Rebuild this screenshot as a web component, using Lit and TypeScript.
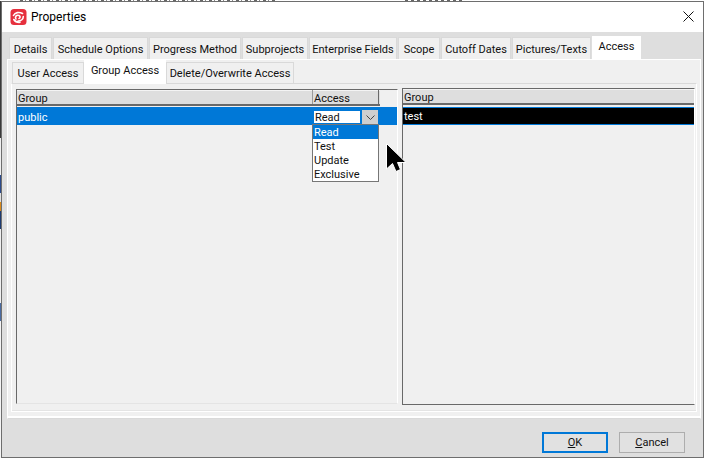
import { LitElement, html, css } from "lit";
import { customElement } from "lit/decorators.js";

const outerTabs: [string, number][] = [
  ["Details", 43],
  ["Schedule Options", 95],
  ["Progress Method", 92],
  ["Subprojects", 66],
  ["Enterprise Fields", 88],
  ["Scope", 42],
  ["Cutoff Dates", 70],
  ["Pictures/Texts", 79],
];
const innerTabs: [string, number, boolean][] = [
  ["User Access", 72, false],
  ["Group Access", 82, true],
  ["Delete/Overwrite Access", 128, false],
];

@customElement("app-root")
export class AppRoot extends LitElement {
  static styles = css`
    :host {
      display: block;
      width: 705px;
      height: 459px;
      overflow: hidden;
      font-family: Roboto, "Noto Sans", sans-serif;
      font-size: 11px;
      color: #111;
      background: #fff;
    }
    .desk {
      display: grid;
      grid-template-columns: 1px 703px 1px;
      grid-template-rows: 1px 457px 1px;
      width: 705px;
      height: 459px;
    }
    .peek-top {
      grid-column: 1 / -1;
      height: 1px;
      background:
        repeating-linear-gradient(90deg, #666 0 3px, #fff 3px 5px, #888 5px 6px, #fff 6px 9px) 20px 0 / 255px 1px no-repeat,
        repeating-linear-gradient(90deg, #666 0 3px, #fff 3px 6px) 405px 0 / 57px 1px no-repeat,
        #fff;
    }
    .peek-left {
      background: linear-gradient(
        #3a3a3a 0 30%,
        #f0f0f0 30% 38%,
        #2b4a8a 38% 42%,
        #e0e0e0 42% 44%,
        #d98a1a 44% 46%,
        #1d3a70 46% 50%,
        #f0f0f0 50% 66%,
        #4a6aa0 66% 70%,
        #f4f4f4 70%
      );
    }
    .window {
      display: flex;
      flex-direction: column;
      min-height: 0;
      border: 1px solid #6e6e6e;
      box-sizing: border-box;
      background: #dedede;
    }
    .title {
      height: 30px;
      flex: none;
      background: #fff;
      display: flex;
      align-items: center;
      padding: 0 9px 0 8px;
      gap: 4px;
      font-size: 12px;
    }
    .title .name {
      flex: 1;
      color: #000;
    }
    .close {
      display: block;
      margin-bottom: 2px;
    }
    .body {
      flex: 1;
      min-height: 0;
      display: flex;
      flex-direction: column;
      padding: 4px 2px 0 5px;
    }
    .tabs {
      display: flex;
      align-items: flex-end;
      height: 23px;
      flex: none;
    }
    .tabs.outer {
      padding-left: 2px;
      gap: 1px;
    }
    .tab {
      box-sizing: border-box;
      height: 22px;
      background: #f0f0f0;
      border: 1px solid #d9d9d9;
      border-bottom: 0;
      display: flex;
      align-items: center;
      justify-content: center;
      white-space: nowrap;
      flex: none;
      padding-top: 1px;
    }
    .tab.active {
      height: 24px;
      background: #fff;
      border: 0;
      margin-bottom: -1px;
      position: relative;
      z-index: 1;
      padding: 0 0 3px;
    }
    .pane {
      flex: none;
      height: 360px;
      box-sizing: border-box;
      background: #f0f0f0;
      border: 1px solid #fff;
      border-bottom-color: #d9d9d9;
      box-shadow: inset 0 -2px 0 #fff;
      padding: 0 3px 6px;
      display: flex;
      flex-direction: column;
    }
    .tabs.inner {
      height: 23px;
      padding-left: 1px;
    }
    .tabs.inner .tab {
      height: 21px;
    }
    .tabs.inner .tab.active {
      height: 24px;
    }
    .inner-pane {
      flex: 1;
      min-height: 0;
      box-sizing: border-box;
      border: 1px solid #fff;
      border-top-color: #d9d9d9;
      padding: 4px 1px 6px 4px;
      display: grid;
      grid-template-columns: 382px 293px;
      column-gap: 4px;
      box-shadow: inset 0 -1px 0 #e4e4e4;
    }
    .list {
      box-sizing: border-box;
      border: 1px solid #fff;
      border-top-color: #696969;
      border-left-color: #696969;
      display: flex;
      flex-direction: column;
      min-width: 0;
    }
    .list.left {
      margin: 1px 0;
      border-bottom-color: #e4e4e4;
    }
    .list.right {
      border-bottom-color: #696969;
    }
    .head {
      display: flex;
      flex: none;
      background: #dedede;
      box-sizing: border-box;
      border-bottom: 2px solid #696969;
      line-height: 12px;
      box-shadow: inset 0 1px 0 #f4f4f4;
      height: 16px;
    }
    .left .head {
      margin-right: 17px;
    }
    .head > div {
      padding-top: 2px;
      line-height: 14px;
      height: 14px;
    }
    .cell-a {
      width: 295px;
      flex: none;
      padding-left: 1px;
      box-sizing: border-box;
    }
    .cell-b {
      width: 67px;
      flex: none;
      box-sizing: border-box;
      padding-left: 1px;
      border-left: 1px solid #9a9a9a;
      border-right: 1px solid #696969;
    }
    .right .head .cell-a {
      width: auto;
    }
    .row {
      display: flex;
      flex: none;
      line-height: 22px;
      height: 18px;
      margin-top: 1px;
      background: #0078d7;
      color: #fff;
    }
    .right .row {
      box-sizing: border-box;
      height: 18px;
      margin-top: 2px;
      background: #000;
      border-top: 1px solid #0078d7;
      border-bottom: 1px solid #0078d7;
      line-height: 18px;
      padding-left: 1px;
    }
    .combo-cell {
      position: relative;
      width: 67px;
      flex: none;
      box-sizing: border-box;
      padding: 3px 1px 0 1px;
      display: flex;
      gap: 1px;
      color: #111;
    }
    .combo-edit {
      width: 48px;
      height: 14px;
      box-sizing: border-box;
      flex: none;
      background: #fff;
      border: 1px solid #0078d7;
      line-height: 14px;
      padding-left: 1px;
    }
    .combo-btn {
      width: 16px;
      height: 14px;
      flex: none;
      background: #cfcfcf;
      display: flex;
      align-items: center;
      justify-content: center;
      padding-top: 1px;
      box-sizing: border-box;
    }
    .popup {
      position: absolute;
      left: 0;
      top: 17px;
      width: 67px;
      height: 58px;
      box-sizing: border-box;
      border: 1px solid #767676;
      background: #fff;
      line-height: 16px;
      z-index: 2;
    }
    .popup div {
      height: 14px;
      padding-left: 1px;
    }
    .popup .sel {
      background: #0078d7;
      color: #fff;
    }
    .foot {
      flex: 1;
      display: flex;
      justify-content: flex-end;
      align-items: flex-start;
      gap: 11px;
      padding: 13px 16px 0 0;
    }
    .btn {
      box-sizing: border-box;
      width: 66px;
      height: 21px;
      display: flex;
      align-items: center;
      justify-content: center;
      background: #e1e1e1;
      border: 1px solid #adadad;
      color: #111;
    }
    .btn.default {
      border: 2px solid #0078d7;
    }
    .cursor {
      position: absolute;
      left: 385px;
      top: 142px;
      z-index: 3;
    }
  `;

  render() {
    return html`
      <div class="desk">
        <div class="peek-top"></div>
        <div class="peek-left"></div>
        <div class="window">
          <div class="title">
            <svg width="17" height="17" viewBox="0 0 17 17">
              <rect x="0.5" y="0" width="16" height="16" rx="3.500" fill="#e6303e" />
              <path d="M3.500 6.500C5 3.500 9 2.500 12.500 4.500M13.300 7.500C13.300 10 11 12 8 12M6 10C4.500 8 6.500 5.500 9 6.500 10.500 7.300 10.500 9 9 9.500M3.800 10.500C5 12.500 7 13.500 10 13.300"
                fill="none" stroke="#fff" stroke-width="1.600" stroke-linecap="round" />
            </svg>
            <span class="name">Properties</span>
            <svg class="close" width="11" height="11" viewBox="0 0 11 11">
              <path d="M.5.5l10 10M10.500 .5l-10 10" stroke="#111" stroke-width="1" fill="none" />
            </svg>
          </div>
          <div class="body">
            <div class="tabs outer">
              ${outerTabs.map(
                ([t, w]) => html`<div class="tab" style="width:${w}px">${t}</div>`
              )}
              <div class="tab active" style="width:49px">Access</div>
            </div>
            <div class="pane">
              <div class="tabs inner">
                ${innerTabs.map(
                  ([t, w, a]) =>
                    html`<div class="tab ${a ? "active" : ""}" style="width:${w}px">${t}</div>`
                )}
              </div>
              <div class="inner-pane">
                <div class="list left">
                  <div class="head">
                    <div class="cell-a">Group</div>
                    <div class="cell-b">Access</div>
                  </div>
                  <div class="row">
                    <div class="cell-a">public</div>
                    <div class="combo-cell">
                      <div class="combo-edit">Read</div>
                      <div class="combo-btn">
                        <svg width="9" height="5" viewBox="0 0 9 5">
                          <path d="M.5.5l4 4 4-4" fill="none" stroke="#444" stroke-width="1" />
                        </svg>
                      </div>
                      <div class="popup">
                        <div class="sel">Read</div>
                        <div>Test</div>
                        <div>Update</div>
                        <div>Exclusive</div>
                      </div>
                    </div>
                  </div>
                </div>
                <div class="list right">
                  <div class="head"><div class="cell-a">Group</div></div>
                  <div class="row">test</div>
                </div>
              </div>
            </div>
            <div class="foot">
              <div class="btn default"><span><u>O</u>K</span></div>
              <div class="btn"><span><u>C</u>ancel</span></div>
            </div>
          </div>
        </div>
        <div class="peek-right"></div>
      </div>
      <svg class="cursor" width="24" height="32" viewBox="0 0 24 32">
        <path d="M1.500 1.500V27L7.500 21.500 11 29.500 15.500 27.500 12.500 20.500H21Z" fill="#000" stroke="#fff" stroke-width="1" />
      </svg>
    `;
  }
}
